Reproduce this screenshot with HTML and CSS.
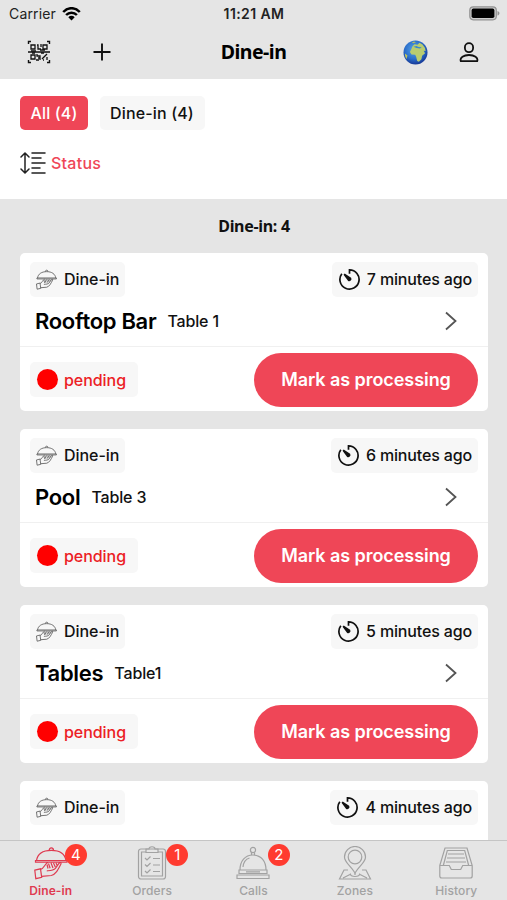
FILE: index.html
```html
<!DOCTYPE html>
<html lang="en">
<head>
<meta charset="utf-8">
<title>Dine-in</title>
<link rel="stylesheet" href="styles.css">
</head>
<body>
<svg class="defs" width="0" height="0" aria-hidden="true">
  <symbol id="cloche" viewBox="0 0 34 34">
    <path d="M2.500 14.500C3.500 8 9 4.300 17.300 4.300S31 8 32 14.500M1.500 14.500h31.500v1.600H1.500zM15.200 4c0-2.800 4.200-2.800 4.200 0M.8 24.200l5.700-1.400 1.200 8.500-5.900 1.400zM6.600 23.300c3.600-.6 3.700-5.300 7.400-7M7.600 30.300l9.700-.8c4.500-1.200 6.500-5.500 9.600-11.500.6-1.500-1-1.800-2-.6l-3.500 5c-2 2.300-5 2.200-8.600 2.400M14.500 17.500l1.600 4.700M17 17l2 5M19.500 17l1.800 4M22 17l1.200 2.500M13 18.500l1 4"/>
  </symbol>
  <symbol id="timer" viewBox="0 0 24 24">
    <path d="M12 6V2a10 10 0 1 1-8 4"/><path d="M6.500 6.500l6.500 4.200a1.500 1.500 0 0 1-2 2z" fill="currentColor"/>
  </symbol>
</svg>
<div class="app">
  <header>
    <div class="statusbar">
      <span class="carrier">Carrier
        <svg width="19" height="14" viewBox="0 0 19 14"><path d="M1.200 5C6-.1 13-.1 17.800 5M4.100 8c3-3.100 7.800-3.100 10.800 0" fill="none" stroke="#000" stroke-width="2.500"/><path d="M6.300 10.200c1.900-1.800 4.500-1.800 6.400 0L9.500 13.500z"/></svg>
      </span>
      <span class="time">11:21 AM</span>
      <svg class="battery" width="31" height="15" viewBox="0 0 31 15"><rect x=".8" y=".8" width="26.500" height="13" rx="3.500" fill="#ccc" stroke="#929292" stroke-width="1.200"/><rect x="2.600" y="2.600" width="22.800" height="9.400" rx="1.800"/><path d="M28.500 5c2.600.8 2.600 3.800 0 4.600z" fill="#929292"/></svg>
    </div>
    <nav class="navbar">
      <svg class="qr" width="24" height="24" viewBox="0 0 24 24"><path d="M1.500 4V1.500H4M20 1.500h2.500V4M22.500 20v2.500H20M4 22.500H1.500V20M1 12h22" stroke-width="1.400"/><path d="M4 5h4v4H4zM16 5h4v4h-4zM10 5h1v4h3M14 4v3M4 15h4v4H4zM10 14v2h3v4M9 20h3M15 19l5-5M16 20h1M20 17v3M11 18h2M4 11h5M13 10h5M5 13h3M14 13h3" stroke-width="1.300"/></svg>
      <svg class="plus" width="18" height="18" viewBox="0 0 18 18"><path d="M9 .5v17M.5 9h17" stroke-width="1.900"/></svg>
      <h1>Dine-in</h1>
      <svg class="globe" width="25" height="25" viewBox="0 0 25 25"><defs><radialGradient id="sea" cx=".45" cy=".38" r=".6"><stop offset="0" stop-color="#5aa6e6"/><stop offset=".65" stop-color="#2b6fcb"/><stop offset="1" stop-color="#183d9b"/></radialGradient></defs><circle cx="12.500" cy="12.500" r="12" fill="url(#sea)"/><path d="M9.500 6.200l2-2 3 .6 2-2 3 1.700 2.500 3.500.6 3-2-.3 1.500 2.500-3 2.500-.7 3.500-2.500 2.500-1.700-.8-1-4-1-2.200-3.700-.3-1.600-2.500 1.500-3z" fill="#b9cc70"/><path d="M10.500 6.700l3-.6 2 1 3.200.1-1.700 1.300-3.500-.5z" fill="#3887cf"/><path d="M2 13.500l2.500 2-1 3.500c-1-1.500-1.700-3.500-1.500-5.500zM9 2.500l2-1 2 .8-3 1z" fill="#bdc35b"/></svg>
      <svg class="user" width="20" height="21" viewBox="0 0 20 21"><rect x="5.900" y="1.200" width="8.200" height="9" rx="4.100"/><path d="M1.800 19.200c-1.300-3.800 3-6.200 8.200-6.200s9.500 2.400 8.200 6.200z" stroke-linejoin="round"/></svg>
    </nav>
  </header>
  <section class="filters">
    <div class="pills"><span class="pill active">All (4)</span><span class="pill">Dine-in (4)</span></div>
    <div class="sort">
      <svg width="26" height="22" viewBox="0 0 26 22"><path d="M5 1v20M1 5l4-4 4 4M1 17l4 4 4-4M12 1h13M12 6h9M12 11h13M12 16h8M12 21h13"/></svg>
      <span>Status</span>
    </div>
  </section>
  <main>
    <h2>Dine-in: 4</h2>
    <article class="card">
      <div class="row top"><span class="chip"><svg class="dish"><use href="#cloche"/></svg>Dine-in</span><span class="chip ago"><svg class="clock"><use href="#timer"/></svg>7 minutes ago</span></div>
      <div class="row place"><strong>Rooftop Bar</strong><span>Table 1</span><svg class="chev" viewBox="0 0 12 20"><path d="M1 1.500l9.500 8.500L1 18.500"/></svg></div>
      <div class="row foot"><span class="chip pending"><i></i>pending</span><button>Mark as processing</button></div>
    </article>
    <article class="card">
      <div class="row top"><span class="chip"><svg class="dish"><use href="#cloche"/></svg>Dine-in</span><span class="chip ago"><svg class="clock"><use href="#timer"/></svg>6 minutes ago</span></div>
      <div class="row place"><strong>Pool</strong><span>Table 3</span><svg class="chev" viewBox="0 0 12 20"><path d="M1 1.500l9.500 8.500L1 18.500"/></svg></div>
      <div class="row foot"><span class="chip pending"><i></i>pending</span><button>Mark as processing</button></div>
    </article>
    <article class="card">
      <div class="row top"><span class="chip"><svg class="dish"><use href="#cloche"/></svg>Dine-in</span><span class="chip ago"><svg class="clock"><use href="#timer"/></svg>5 minutes ago</span></div>
      <div class="row place"><strong>Tables</strong><span>Table1</span><svg class="chev" viewBox="0 0 12 20"><path d="M1 1.500l9.500 8.500L1 18.500"/></svg></div>
      <div class="row foot"><span class="chip pending"><i></i>pending</span><button>Mark as processing</button></div>
    </article>
    <article class="card">
      <div class="row top"><span class="chip"><svg class="dish"><use href="#cloche"/></svg>Dine-in</span><span class="chip ago"><svg class="clock"><use href="#timer"/></svg>4 minutes ago</span></div>
    </article>
  </main>
  <footer class="tabs">
    <div class="tab on"><svg viewBox="0 0 34 34"><use href="#cloche"/></svg><span>Dine-in</span><b>4</b></div>
    <div class="tab"><svg viewBox="0 0 34 34"><rect x="3.500" y="3" width="27" height="30" rx="2.500"/><path d="M11 6H6.500v24h21V6H23M11 6.500V3h3c0-3 6-3 6 0h3v3.500zM10 12l2 2 3.500-3.500M10 18.500l2 2 3.500-3.500M10 25l2 2 3.500-3.500M18 12.500h7M18 19h7M18 25.500h7"/></svg><span>Orders</span><b>1</b></div>
    <div class="tab"><svg viewBox="0 0 34 34"><circle cx="17" cy="4" r="2.600"/><path d="M15.500 6.500v2.300M18.500 6.500v2.300M4 24c0-9 5-15 13-15s13 6 13 15zM7 21c.5-5 3-8 6.500-9M3 24h28v3.500H3zM1 29h32v3.500H1zM10 25.800h14"/></svg><span>Calls</span><b>2</b></div>
    <div class="tab"><svg viewBox="0 0 34 34"><path d="M17 27C12.500 19.500 6.500 16.500 6.500 11a10.500 10.500 0 0 1 21 0C27.500 16.500 21.500 19.500 17 27z"/><circle cx="17" cy="11" r="6.800"/><path d="M10 24H6L1.500 33h31L28 24h-4M12.500 27.500c-1.500 4 10.500 4 9 0M17 27v2M5 32l7-3.500M29 32l-7-3.500"/></svg><span>Zones</span></div>
    <div class="tab"><svg viewBox="0 0 34 34"><path d="M.8 19.500L6 2h22l5.200 17.500V30q0 2-2 2H2.800q-2 0-2-2zM.8 19.500h9.500l2 4h9.400l2-4h9.500M4.300 19.500L8.300 4.500h17.400l4 15M9 8h16M8 12h18M7 16h20"/></svg><span>History</span></div>
  </footer>
</div>
</body>
</html>
```
FILE: styles.css
```css
* { box-sizing: border-box; }
body { margin: 0; font-family: Inter, "Liberation Sans", sans-serif; color: #111; }
svg { display: block; flex: none; fill: none; stroke: currentColor; }
.defs { position: absolute; }
.app { height: 900px; background: #e5e5e5; display: flex; flex-direction: column; overflow: hidden; }
header { height: 79px; flex: none; }
.statusbar { height: 27px; display: grid; grid-template-columns: 1fr auto 1fr; align-items: center; padding: 0 7px 0 9px; font-size: 14px; color: #222; }
.statusbar svg { fill: #000; stroke: none; }
.carrier { display: flex; gap: 6px; align-items: center; letter-spacing: .15px; }
.time { font-weight: 600; letter-spacing: .4px; padding-right: 1px; }
.battery { justify-self: end; }
.navbar { height: 52px; display: grid; grid-template-columns: 24px 60px 1fr 25px 53px; align-items: center; padding: 0 28px 2px 27px; color: #111; }
.plus { margin-left: 42px; }
.navbar h1 { margin: 0; padding-right: 5px; text-align: center; font: 700 19.500px/26px "Noto Sans", sans-serif; letter-spacing: -.5px; color: #000; }
.globe { stroke: none; margin-left: 2px; }
.user { justify-self: end; stroke-width: 1.800; }
.filters { height: 120px; flex: none; background: #fff; padding: 17px 20px 0; }
.pills { display: flex; gap: 12px; }
.pill { height: 34px; padding: 0 10px; display: flex; align-items: center; border-radius: 5px; background: #f7f7f7; font-size: 16px; font-weight: 500; letter-spacing: .15px; }
.pill.active { padding: 0 10.500px; background: #ef4657; color: #fff; }
.pill + .pill { padding: 0 11px 0 10px; }
.sort { margin-top: 22px; height: 22px; display: flex; align-items: center; gap: 5px; font-size: 16px; font-weight: 500; letter-spacing: .25px; color: #ef4657; }
.sort svg { color: #222; stroke-width: 1.500; stroke-linecap: round; }
main { flex: 1; min-height: 0; overflow: hidden; padding: 0 19px 0 20px; }
h2 { margin: 0; height: 54px; text-align: center; font: 700 16px/54px "Noto Sans", sans-serif; letter-spacing: -.3px; color: #111; }
.card { height: 158px; margin-bottom: 18px; background: #fff; border-radius: 5px; overflow: hidden; }
.row { display: flex; align-items: center; padding: 0 10px; }
.top { height: 53px; justify-content: space-between; }
.chip { height: 35px; display: flex; align-items: center; border-radius: 5px; background: #f7f7f7; padding: 0 6px 1px; font-size: 16px; font-weight: 500; letter-spacing: -.05px; }
.chip.ago { letter-spacing: -.15px; }
.dish { width: 21px; height: 21px; margin-right: 7px; color: #555; stroke-width: 1.300; }
.clock { width: 23px; height: 23px; margin-right: 6px; stroke-width: 1.800; }
.place { height: 41px; padding: 0 31px 11px 15px; border-bottom: 1px solid #f0f0f0; }
.place strong { font-size: 22px; font-weight: 600; letter-spacing: -.3px; color: #000; }
.place span { margin-left: 11px; font-size: 16px; font-weight: 500; letter-spacing: -.15px; }
.chev { width: 12px; height: 20px; margin-left: auto; color: #555; stroke-width: 1.800; }
.foot { height: 64px; padding-top: 1px; justify-content: space-between; }
.pending { color: #ec2024; padding: 0 12px 0 7px; }
.pending i { width: 21px; height: 21px; border-radius: 50%; background: #f00; margin-right: 6px; }
button { width: 224px; height: 54px; border: 0; padding: 0; border-radius: 27px; background: #ef4657; color: #fff; font: 600 18px Inter, sans-serif; letter-spacing: -.06px; }
.tabs { height: 60px; flex: none; border-top: 1px solid #c5c5c5; display: grid; grid-template-columns: repeat(5, 1fr); color: #a2a2a2; }
.tab { position: relative; display: flex; flex-direction: column; align-items: center; padding-top: 5px; font-size: 12px; font-weight: 500; line-height: 14px; letter-spacing: .1px; }
.tab svg { width: 34px; height: 34px; margin-bottom: 4px; stroke-width: 1.200; }
.tab.on { color: #df3a50; font-weight: 600; }
.tab b { position: absolute; left: 65px; top: 3px; width: 22px; height: 22px; border-radius: 50%; background: #ff3b30; color: #fff; font-size: 15px; font-weight: 400; line-height: 22px; text-align: center; }
```
